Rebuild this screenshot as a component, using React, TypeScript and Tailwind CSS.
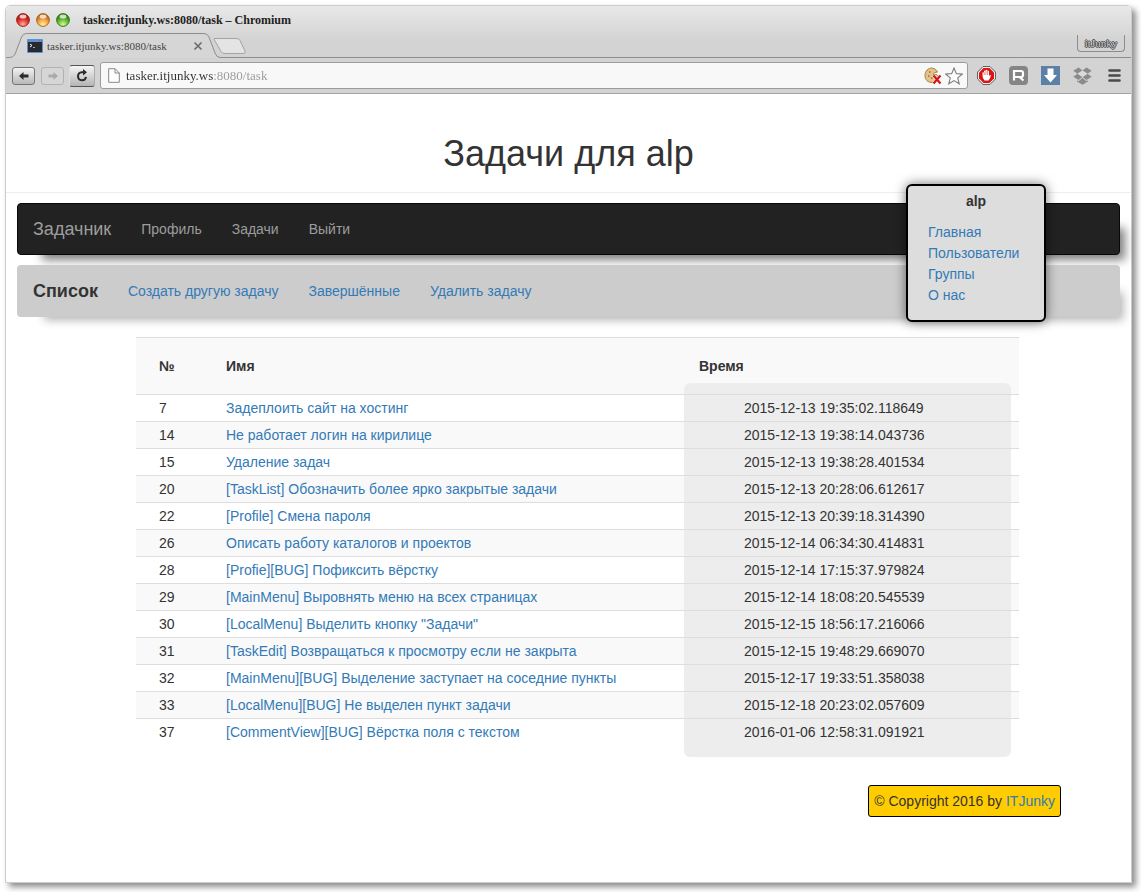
import type { ReactNode } from "react";

type Task = { id: number; name: string; time: string };

const tasks: Task[] = [
  { id: 7, name: "Задеплоить сайт на хостинг", time: "2015-12-13 19:35:02.118649" },
  { id: 14, name: "Не работает логин на кирилице", time: "2015-12-13 19:38:14.043736" },
  { id: 15, name: "Удаление задач", time: "2015-12-13 19:38:28.401534" },
  { id: 20, name: "[TaskList] Обозначить более ярко закрытые задачи", time: "2015-12-13 20:28:06.612617" },
  { id: 22, name: "[Profile] Смена пароля", time: "2015-12-13 20:39:18.314390" },
  { id: 26, name: "Описать работу каталогов и проектов", time: "2015-12-14 06:34:30.414831" },
  { id: 28, name: "[Profie][BUG] Пофиксить вёрстку", time: "2015-12-14 17:15:37.979824" },
  { id: 29, name: "[MainMenu] Выровнять меню на всех страницах", time: "2015-12-14 18:08:20.545539" },
  { id: 30, name: '[LocalMenu] Выделить кнопку "Задачи"', time: "2015-12-15 18:56:17.216066" },
  { id: 31, name: "[TaskEdit] Возвращаться к просмотру если не закрыта", time: "2015-12-15 19:48:29.669070" },
  { id: 32, name: "[MainMenu][BUG] Выделение заступает на соседние пункты", time: "2015-12-17 19:33:51.358038" },
  { id: 33, name: "[LocalMenu][BUG] Не выделен пункт задачи", time: "2015-12-18 20:23:02.057609" },
  { id: 37, name: "[CommentView][BUG] Вёрстка поля с текстом", time: "2016-01-06 12:58:31.091921" },
];

function TrafficLight({ id, label, dark, mid, light }: { id: string; label: string; dark: string; mid: string; light: string }) {
  return (
    <button type="button" aria-label={label} className="size-[14px]">
      <svg viewBox="0 0 14 14" className="size-[14px]">
        <defs>
          <radialGradient id={id} cx="0.5" cy="0.85" r="0.75">
            <stop offset="0" stopColor={light} />
            <stop offset="0.55" stopColor={mid} />
            <stop offset="1" stopColor={dark} />
          </radialGradient>
        </defs>
        <circle cx="7" cy="7" r="6.4" fill={`url(#${id})`} stroke={dark} strokeWidth="0.9" />
        <ellipse cx="7" cy="3.6" rx="3.4" ry="2" fill="#fff" opacity="0.75" />
      </svg>
    </button>
  );
}

function ChromeButton({ label, className, children }: { label: string; className: string; children: ReactNode }) {
  return (
    <button type="button" aria-label={label} className={`flex items-center justify-center rounded-[3px] border ${className}`}>
      {children}
    </button>
  );
}

function TitleBar() {
  return (
    <div className="flex h-[27px] items-center pl-[10px]">
      <div className="flex gap-[6px]">
        <TrafficLight id="light-close" label="Close" dark="#9c1712" mid="#e0352c" light="#ffb0a0" />
        <TrafficLight id="light-min" label="Minimize" dark="#a8601a" mid="#f2a03d" light="#fff2a8" />
        <TrafficLight id="light-max" label="Maximize" dark="#2f7414" mid="#65b834" light="#d8ff9a" />
      </div>
      <div className="ml-[13px] text-[12px] leading-4 font-bold text-[#222]">tasker.itjunky.ws:8080/task – Chromium</div>
    </div>
  );
}

function TabStrip() {
  return (
    <div className="flex h-[25px] items-start">
      <div className="relative h-[25px] w-[246px] shrink-0">
        <svg viewBox="0 0 246 25" className="absolute inset-0 h-[25px] w-[246px]" fill="none">
          <path d="M208 5.500H230Q233 5.500 234 7.500L239 18Q240 20.500 237 20.500H219Q216 20.500 215 18.500L209 8Q207 5.500 209 5.500Z" fill="#e4e4e4" stroke="#a3a3a3" />
          <path d="M0 24.500H3Q8 24.500 9.500 20L15.500 4Q17 .5 20.500 .5H198Q201.500 .5 203 4L209 20Q210.500 24.500 214 24.500H246V25H0Z" fill="#d6d6d6" />
          <path d="M0 24.500H3Q8 24.500 9.500 20L15.500 4Q17 .5 20.500 .5H198Q201.500 .5 203 4L209 20Q210.500 24.500 214 24.500H246" stroke="#8d8d8d" />
        </svg>
        <div className="relative flex h-[25px] items-center pl-[21px]">
          <svg viewBox="0 0 16 14" className="h-[14px] w-4 shrink-0">
            <rect width="16" height="14" rx="1" fill="#5b8fd6" />
            <rect x="1" y="3" width="14" height="10" fill="#252a30" />
            <path d="M12 1.500h1M14 1.500h1" stroke="#e34c3a" />
            <path d="M3 5l2 1.500L3 8" stroke="#fff" fill="none" />
            <path d="M6 8.500h2" stroke="#aaa" />
          </svg>
          <span className="ml-1 w-[142px] text-[11px] leading-4 whitespace-nowrap text-[#444]">tasker.itjunky.ws:8080/task</span>
          <button type="button" aria-label="Close tab" className="ml-1 flex size-[10px] items-center justify-center">
            <svg viewBox="0 0 10 10" className="size-[10px]">
              <path d="M1.500 1.500l7 7M8.500 1.500l-7 7" stroke="#6b6b6b" strokeWidth="1.600" />
            </svg>
          </button>
        </div>
      </div>
      <div className="flex h-[25px] flex-1 justify-end border-b border-[#8d8d8d] pr-[6px]">
        <button
          type="button"
          className="mt-[2px] h-[17px] w-12 rounded-b-[4px] border border-t-0 border-[#8d8d8d] text-[11px] leading-[16px] text-[#ccc] [text-shadow:1px_0_0_#444,-1px_0_0_#444,0_1px_0_#444,0_-1px_0_#444]"
        >
          itJunky
        </button>
      </div>
    </div>
  );
}

function ToolBar() {
  return (
    <div className="flex h-9 items-center border-b border-[#a3a3a3] pr-[7px] pl-[6px]">
      <ChromeButton label="Back" className="h-[18px] w-[23px] border-[#777] bg-linear-to-b from-[#f2f2f2] to-[#b8b8b8]">
        <svg viewBox="0 0 10 8" className="h-2 w-[10px]">
          <path d="M0 4L4.500 0V2.500H9.500V5.500H4.500V8Z" fill="#2b2b2b" />
        </svg>
      </ChromeButton>
      <ChromeButton label="Forward" className="ml-[6px] h-[18px] w-[23px] border-[#b2b2b2] bg-[#d6d6d6]">
        <svg viewBox="0 0 10 8" className="h-2 w-[10px]">
          <path d="M10 4L5.500 0V2.500H.5V5.500H5.500V8Z" fill="#a9a9a9" />
        </svg>
      </ChromeButton>
      <ChromeButton label="Reload" className="ml-[5px] h-[22px] w-[26px] border-t-[#555] border-r-[#aaa] border-b-[#555] border-l-[#ddd] bg-linear-to-b from-[#f6f6f6] to-[#b4b4b4]">
        <svg viewBox="0 0 12 13" className="h-[13px] w-3" fill="none">
          <path d="M7.500 3.200H5.800A4 4 0 1 0 10 7.800" stroke="#2b2b2b" strokeWidth="2" />
          <path d="M7 0L11 3.300L7 6.500Z" fill="#2b2b2b" />
        </svg>
      </ChromeButton>
      <div className="ml-[5px] flex h-[27px] flex-1 items-center rounded-[3px] border border-[#9b9b9b] bg-[#f8f8f8] pr-1 pl-[7px]">
        <svg viewBox="0 0 12 15" className="h-[15px] w-3 shrink-0" fill="none">
          <path d="M.7 .7H7L11.300 5V14.300H.7Z" fill="#fff" stroke="#888" />
          <path d="M7 .7V5H11.300" stroke="#888" />
        </svg>
        <input
          aria-label="Address"
          defaultValue="tasker.itjunky.ws:8080/task"
          className="ml-[6px] h-[22px] min-w-0 flex-1 bg-linear-[90deg,#333_87px,#999_87px] bg-clip-text text-[13px] text-transparent outline-none"
        />
        <svg viewBox="0 0 18 18" className="size-[18px] shrink-0">
          <path d="M8 1C4 1 1 4 1 8.500C1 13 4 15.500 8 15.500C12 15.500 15.500 12 15.500 9Q13 9 12.500 7.500L9.500 8Q9 6 11 5.500L13.500 5Q12 1.500 8 1Z" fill="#e3c38b" stroke="#a98347" />
          <path d="M5 5h1.500M4 9h1.500M7 11h1.500" stroke="#96713a" strokeWidth="1.500" />
          <path d="M9.500 8.500l7 8M16.500 8.500l-7 8" stroke="#fff" strokeWidth="3.400" />
          <path d="M9.500 8.500l7 8M16.500 8.500l-7 8" stroke="#d41414" strokeWidth="2.200" />
        </svg>
        <button type="button" aria-label="Bookmark" className="ml-[3px]">
          <svg viewBox="0 0 18 18" className="size-[18px]">
            <path d="M9 1L11.300 6.600L17.300 7L12.700 10.900L14.200 16.800L9 13.600L3.800 16.800L5.300 10.900L.7 7L6.700 6.600Z" fill="#fff" stroke="#7d7d7d" strokeWidth="1.100" />
          </svg>
        </button>
      </div>
      <div className="ml-[9px] flex items-center gap-[13px]">
        <button type="button" aria-label="AdBlock">
          <svg viewBox="0 0 19 19" className="size-[19px]">
            <path d="M6 .6H13L18.400 6V13L13 18.400H6L.6 13V6Z" fill="#fff" stroke="#555" />
            <path d="M6.500 2H12.500L17 6.500V12.500L12.500 17H6.500L2 12.500V6.500Z" fill="#db1515" />
            <path d="M5.500 9.500V6.500Q6.300 5.800 7 6.500V5Q7.800 4.200 8.700 5V4Q9.500 3.400 10.300 4V5Q11.200 4.300 12 5V10Q13 8.500 14 9Q13.500 12 11.500 14.500H7.500Q5.500 12.500 5.500 9.500Z" fill="#fff" />
            <path d="M7.200 6v3M8.900 5v4M10.600 5v4" stroke="#db1515" strokeWidth=".5" />
          </svg>
        </button>
        <button type="button" aria-label="Reader extension">
          <svg viewBox="0 0 19 19" className="size-[19px]" fill="none">
            <rect width="19" height="19" rx="4" fill="#858585" />
            <path d="M5 14.500V5H12Q14 5 14 7V9Q14 11 12 11H5M10.500 11L14.500 14.500" stroke="#fff" strokeWidth="2.200" />
          </svg>
        </button>
        <button type="button" aria-label="Downloads">
          <svg viewBox="0 0 19 19" className="size-[19px]">
            <rect width="19" height="19" fill="#5d80a8" />
            <path d="M6.500 2.500H12.500V9H16L9.500 16.500L3 9H6.500Z" fill="#fff" />
          </svg>
        </button>
        <button type="button" aria-label="Dropbox">
          <svg viewBox="0 0 19 18" className="h-[18px] w-[19px]" fill="#8b8b8b">
            <path d="M5.500 .5L9.500 3.500L4.500 6.800L.3 3.800ZM13.500 .5L18.700 3.800L14.500 6.800L9.500 3.500ZM.3 9.800L4.500 6.800L9.500 10L5.500 13ZM18.700 9.800L14.500 6.800L9.500 10L13.500 13ZM9.500 11L13.500 14.200L15 13.300V14.500L9.500 17.800L4 14.500V13.300L5.500 14.200Z" />
            <path d="M9.500 3.500L14.500 6.800L9.500 10L4.500 6.800Z" fill="#d9d9d9" />
          </svg>
        </button>
        <button type="button" aria-label="Menu">
          <svg viewBox="0 0 19 15" className="h-[15px] w-[19px]">
            <path d="M4.500 2.500H14.500M4.500 7.500H14.500M4.500 12.500H14.500" stroke="#4a4a4a" strokeWidth="2.600" strokeLinecap="round" />
          </svg>
        </button>
      </div>
    </div>
  );
}

function Link({ children, className = "text-[#337ab7]" }: { children: ReactNode; className?: string }) {
  return (
    <a href="#" className={className}>
      {children}
    </a>
  );
}

function Navigation() {
  return (
    <div className="mx-[11px] mt-[10px] flex flex-col gap-[10px]">
      <nav className="flex h-[52px] items-center gap-[30px] rounded-[4px] border border-[#080808] bg-[#222] pl-[15px] shadow-[15px_15px_10px_-10px_rgba(0,0,0,0.5)]">
        <Link className="text-[18px] text-[#9d9d9d]">Задачник</Link>
        <Link className="text-[#9d9d9d]">Профиль</Link>
        <Link className="text-[#9d9d9d]">Задачи</Link>
        <Link className="text-[#9d9d9d]">Выйти</Link>
      </nav>
      <nav className="flex h-[52px] items-center gap-[30px] rounded-[4px] bg-[#ccc] pl-4 shadow-[15px_15px_10px_-12px_rgba(0,0,0,0.3)]">
        <span className="text-[18px] font-bold">Список</span>
        <Link>Создать другую задачу</Link>
        <Link>Завершённые</Link>
        <Link>Удалить задачу</Link>
      </nav>
    </div>
  );
}

function UserMenu() {
  return (
    <aside className="absolute top-[90px] right-[85px] w-[140px] rounded-[6px] border-2 border-black bg-[#ddd] pt-[5px] pb-[14px] shadow-[0_0_12px_rgba(0,0,0,0.55)]">
      <div className="text-center font-bold">alp</div>
      <ul className="mt-[11px] pl-5 leading-[21px]">
        <li><Link>Главная</Link></li>
        <li><Link>Пользователи</Link></li>
        <li><Link>Группы</Link></li>
        <li><Link>О нас</Link></li>
      </ul>
    </aside>
  );
}

function TaskTable() {
  return (
    <div className="mt-5 mr-28 ml-[130px]">
      <table className="w-full table-fixed border-separate border-spacing-0 text-left">
        <colgroup>
          <col className="w-[90px]" />
          <col className="w-[458px]" />
          <col />
        </colgroup>
        <thead>
          <tr className="bg-[#f9f9f9]">
            <th className="border-t border-[#ddd] py-[18px] pl-[23px]">№</th>
            <th className="border-t border-[#ddd]">Имя</th>
            <th className="border-t border-[#ddd] p-0 pr-2 align-bottom">
              <div className="pb-[7px] pl-[15px]">Время</div>
              <div className="h-[11px] rounded-t-[6px] bg-[#ededed]" />
            </th>
          </tr>
        </thead>
        <tbody>
          {tasks.map((task) => (
            <tr key={task.id} className="even:bg-[#f9f9f9]">
              <td className="border-t border-[#ddd] py-[3px] pl-[23px]">{task.id}</td>
              <td className="border-t border-[#ddd] whitespace-nowrap">
                <Link>{task.name}</Link>
              </td>
              <td className="border-t border-[#ddd] p-0 pr-2 whitespace-nowrap">
                <div className="bg-[#ededed] py-[3px] pl-[60px]">{task.time}</div>
              </td>
            </tr>
          ))}
        </tbody>
      </table>
      <div className="mr-2 ml-[548px] h-3 rounded-b-[6px] bg-[#ededed]" />
    </div>
  );
}

export default function App() {
  return (
    <div className="flex min-h-screen flex-col bg-white pt-[5px] pr-[9px] pb-[9px] pl-[5px]">
      <div className="flex flex-1 flex-col rounded-t-[5px] border border-[#ccc] shadow-[4px_4px_6px_rgba(0,0,0,0.45)]">
        <header className="rounded-t-[5px] bg-linear-to-b from-[#e8e8e8] to-[#d3d3d3] to-[35px] font-['Liberation_Serif',serif]">
          <TitleBar />
          <TabStrip />
          <ToolBar />
        </header>
        <main className="relative flex-1 bg-white pb-16 font-['Liberation_Sans',Arial,sans-serif] text-[14px] leading-5 text-[#333]">
          <div className="border-b border-[#eee] pt-10 pb-[18px]">
            <h1 className="text-center text-[36px] leading-10">Задачи для alp</h1>
          </div>
          <Navigation />
          <UserMenu />
          <TaskTable />
          <footer className="mt-7 mr-[70px] flex justify-end">
            <div className="rounded-[3px] border border-black bg-[#fc0] p-[5px]">
              © Copyright 2016 by <Link>ITJunky</Link>
            </div>
          </footer>
        </main>
      </div>
    </div>
  );
}
